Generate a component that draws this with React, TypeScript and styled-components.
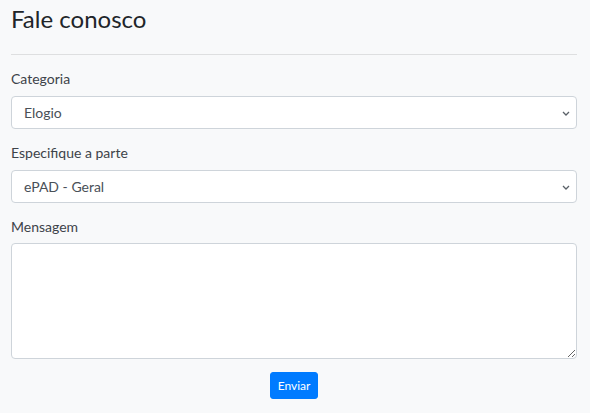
import React from "react";
import styled, { createGlobalStyle } from "styled-components";

const Global = createGlobalStyle`
  html, body { margin: 0; padding: 0; background: #f8f9fa; }
  body {
    font-family: Lato, "Open Sans", sans-serif;
    font-size: 14px;
    line-height: 1.5;
    color: #212529;
  }
  * { box-sizing: border-box; }
`;

const Page = styled.div`
  padding: 4px 13px 0 11px;
`;

const Title = styled.h3`
  margin: 0 0 20px;
  font-size: 24px;
  font-weight: 400;
  line-height: 30px;
  color: #212529;
`;

const Rule = styled.hr`
  margin: 0 0 13px;
  border: 0;
  border-top: 1px solid rgba(0, 0, 0, 0.1);
`;

const Form = styled.form`
  display: flex;
  flex-direction: column;
  gap: 13px;
`;

const Group = styled.div<{ $tight?: boolean }>`
  display: flex;
  flex-direction: column;
  gap: ${(p) => (p.$tight ? "6px" : "7px")};
`;

const Label = styled.label`
  font-size: 14px;
  line-height: 21px;
  color: #3d4349;
`;

const SelectWrap = styled.div`
  position: relative;
`;

const Select = styled.select`
  appearance: none;
  width: 100%;
  height: 33px;
  padding: 5px 28px 5px 12px;
  font-family: inherit;
  font-size: 14px;
  line-height: 21px;
  color: #495057;
  background: #fff;
  border: 1px solid #ced4da;
  border-radius: 4px;
  outline: none;
`;

const Chevron = styled.svg`
  position: absolute;
  right: 6px;
  top: 12px;
  width: 10px;
  height: 10px;
  pointer-events: none;
`;

const TextArea = styled.textarea`
  display: block;
  width: 100%;
  height: 116px;
  padding: 5px 12px;
  font-family: inherit;
  font-size: 14px;
  color: #495057;
  background: #fff;
  border: 1px solid #ced4da;
  border-radius: 4px;
  outline: none;
`;

const Actions = styled.div`
  display: flex;
  justify-content: center;
`;

const Button = styled.button`
  height: 27px;
  padding: 3px 7px;
  font-family: inherit;
  font-size: 12px;
  line-height: 19px;
  color: #fff;
  background: #007bff;
  border: 1px solid #007bff;
  border-radius: 3px;
`;

function Dropdown({ value }: { value: string }) {
  return (
    <SelectWrap>
      <Select defaultValue={value}>
        <option>{value}</option>
      </Select>
      <Chevron viewBox="0 0 10 10">
        <path d="M2 4 L5 7 L8 4" fill="none" stroke="#5a6168" strokeWidth="1.3" />
      </Chevron>
    </SelectWrap>
  );
}

export default function App() {
  return (
    <Page>
      <Global />
      <Title>Fale conosco</Title>
      <Rule />
      <Form onSubmit={(e) => e.preventDefault()}>
        <Group>
          <Label>Categoria</Label>
          <Dropdown value="Elogio" />
        </Group>
        <Group>
          <Label>Especifique a parte</Label>
          <Dropdown value="ePAD - Geral" />
        </Group>
        <Group $tight>
          <Label>Mensagem</Label>
          <TextArea />
        </Group>
        <Actions>
          <Button type="submit">Enviar</Button>
        </Actions>
      </Form>
    </Page>
  );
}
